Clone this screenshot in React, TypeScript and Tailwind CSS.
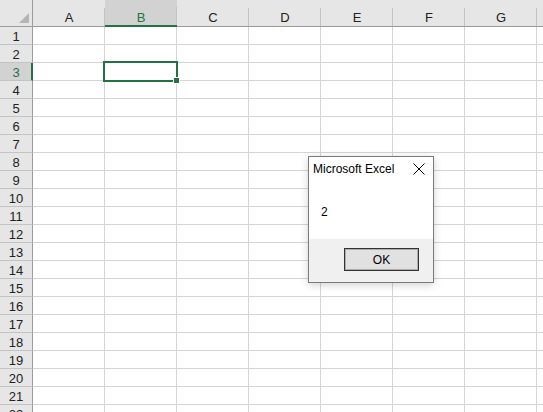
import React from "react";

const COLS = ["A", "B", "C", "D", "E", "F", "G", ""];
const ROWS = Array.from({ length: 22 }, (_, i) => i + 1);

export default function App() {
  return (
    <div className="relative w-[543px] h-[412px] overflow-hidden bg-white font-['Liberation_Sans',Arial,sans-serif] text-[13px] text-[#222]">
      {/* Header row */}
      <div className="flex h-[27px]">
        <div className="relative w-[33px] shrink-0 bg-[#e6e6e6] border-r border-b border-[#9b9b9b]">
          <svg className="absolute left-[19px] top-[13px]" width="10" height="10" viewBox="0 0 10 10">
            <polygon points="10,0 10,10 0,10" fill="#b5b5b5" />
          </svg>
        </div>
        {COLS.map((c, i) => {
          const sel = c === "B";
          return (
            <div
              key={i}
              className={
                sel
                  ? "relative w-[72px] shrink-0 bg-[#d2d2d2] border-b-2 border-[#217346] text-[#217346] flex items-start justify-center pt-[11px]"
                  : "relative w-[72px] shrink-0 bg-[#e6e6e6] border-b border-[#9b9b9b] flex items-start justify-center pt-[11px]"
              }
            >
              <span className="leading-[14px]">{c}</span>
              <div className="absolute right-0 bottom-0 w-px h-[18px] bg-[#c3c3c3]" />
            </div>
          );
        })}
      </div>
      {/* Rows */}
      {ROWS.map((r) => {
        const sel = r === 3;
        return (
          <div key={r} className="flex h-[18px]">
            <div
              className={
                sel
                  ? "w-[33px] shrink-0 bg-[#d2d2d2] border-r-2 border-r-[#217346] border-b border-b-[#c3c3c3] text-[#217346] flex items-center justify-center pl-[1px] pt-[3px] leading-[14px]"
                  : "w-[33px] shrink-0 bg-[#e6e6e6] border-r border-r-[#9b9b9b] border-b border-b-[#c3c3c3] flex items-center justify-center pt-[3px] leading-[14px]"
              }
            >
              {r}
            </div>
            {COLS.map((c, i) => (
              <div key={i} className="w-[72px] shrink-0 border-r border-b border-[#d4d4d4]" />
            ))}
          </div>
        );
      })}

      {/* Selection box on B3 */}
      <div className="absolute left-[103px] top-[61px] w-[75px] h-[21px] border-2 border-[#217346]" />
      <div className="absolute left-[173px] top-[77px] w-[7px] h-[7px] bg-[#217346] border border-white" />

      {/* Message box */}
      <div className="absolute left-[308px] top-[156px] w-[126px] h-[127px] flex flex-col bg-white border border-[#7a7a7a] shadow-[0_2px_8px_rgba(0,0,0,0.18)] text-[12px] text-black">
        <div className="h-[23px] flex items-center justify-between pl-[4px] pr-[8px]">
          <span className="leading-[14px]">Microsoft Excel</span>
          <svg width="12" height="12" viewBox="0 0 12 12" className="mt-[1px]">
            <path d="M0.5 0.5 L11.5 11.5 M11.5 0.5 L0.5 11.5" stroke="#000" strokeWidth="1" fill="none" />
          </svg>
        </div>
        <div className="flex-1 pt-[23px] pl-[12px]">
          <span className="leading-[14px]">2</span>
        </div>
        <div className="h-[43px] bg-[#f0f0f0] flex justify-end items-start pt-[9px] pr-[14px]">
          <div className="w-[75px] h-[23px] border border-[#333] bg-[#e1e1e1] flex items-center justify-center">
            <div className="w-full h-full border border-[#adadad] flex items-center justify-center leading-[14px]">
              OK
            </div>
          </div>
        </div>
      </div>
    </div>
  );
}
